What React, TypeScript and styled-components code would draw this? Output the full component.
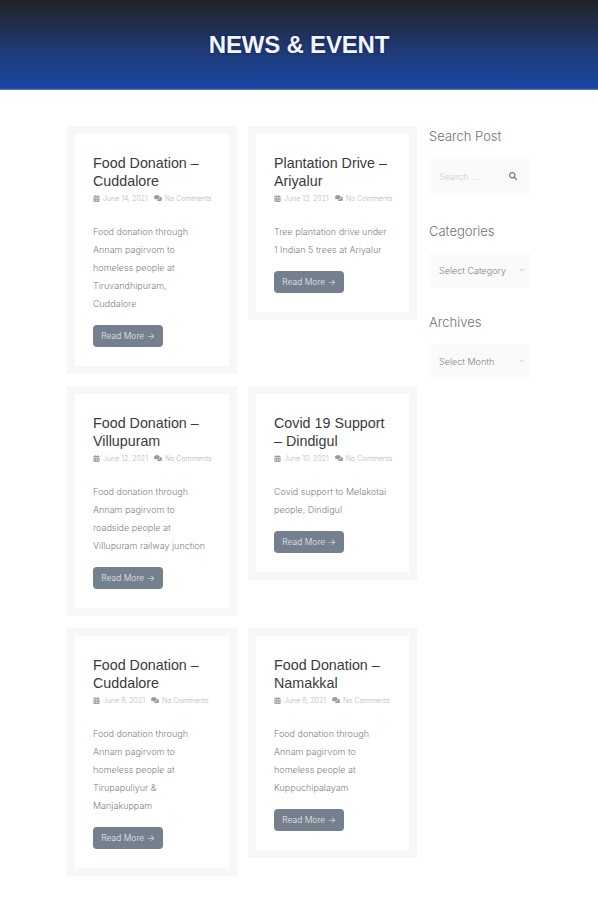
import { FaCalendarAlt, FaComments, FaSearch } from "react-icons/fa";
import { FiChevronDown } from "react-icons/fi";
import styled, { createGlobalStyle } from "styled-components";

type Post = {
  title: string;
  date: string;
  text: string[];
};

const posts: Post[] = [
  {
    title: "Food Donation – Cuddalore",
    date: "June 14, 2021",
    text: ["Food donation through", "Annam pagirvom to", "homeless people at", "Tiruvandhipuram,", "Cuddalore"],
  },
  {
    title: "Plantation Drive – Ariyalur",
    date: "June 13, 2021",
    text: ["Tree plantation drive under", "1 Indian 5 trees at Ariyalur"],
  },
  {
    title: "Food Donation – Villupuram",
    date: "June 12, 2021",
    text: ["Food donation through", "Annam pagirvom to", "roadside people at", "Villupuram railway junction"],
  },
  {
    title: "Covid 19 Support – Dindigul",
    date: "June 10, 2021",
    text: ["Covid support to Melakotai", "people, Dindigul"],
  },
  {
    title: "Food Donation – Cuddalore",
    date: "June 8, 2021",
    text: ["Food donation through", "Annam pagirvom to", "homeless people at", "Tirupapuliyur &", "Manjakuppam"],
  },
  {
    title: "Food Donation – Namakkal",
    date: "June 8, 2021",
    text: ["Food donation through", "Annam pagirvom to", "homeless people at", "Kuppuchipalayam"],
  },
];

const GlobalStyle = createGlobalStyle`
  body {
    margin: 0;
    background: #fff;
    font-family: "Inter", "Liberation Sans", sans-serif;
  }
`;

const Banner = styled.header`
  height: 90px;
  display: flex;
  align-items: center;
  justify-content: center;
  background: linear-gradient(#222226 0%, #1f3a74 55%, #1746a2 98%, #6d8bcb 100%);
  h1 {
    margin: 0;
    font-family: "Liberation Sans", Arial, sans-serif;
    font-size: 24px;
    font-weight: bold;
    letter-spacing: -0.2px;
    color: #f4f6fb;
    text-shadow: 0 0 3px #0c1f5c;
  }
`;
const Content = styled.main`
  display: grid;
  grid-template-columns: 350px 101px;
  column-gap: 12px;
  padding: 36px 0 0 67px;
`;
const PostGrid = styled.div`
  display: grid;
  grid-template-columns: 170px 169px;
  gap: 12px 11px;
  align-items: start;
`;
const Card = styled.article`
  border: 8px solid #f7f7f8;
  padding: 20px 18px 19px;
  h2 {
    margin: 0;
    font-family: "Liberation Sans", Arial, sans-serif;
    font-size: 14.3px;
    font-weight: 400;
    line-height: 18px;
    color: #3a3a3c;
  }
`;
const Meta = styled.div`
  display: flex;
  align-items: center;
  gap: 6px;
  height: 16px;
  margin-bottom: 17px;
  font-size: 7px;
  font-weight: 300;
  color: #b8b8bc;
  white-space: nowrap;
  span {
    display: flex;
    align-items: center;
    gap: 3px;
  }
  svg {
    color: #99999e;
  }
`;
const Body = styled.div`
  margin-bottom: 12px;
  font-size: 9px;
  font-weight: 300;
  line-height: 18px;
  color: #808084;
  white-space: nowrap;
`;
const ReadMore = styled.a`
  display: flex;
  align-items: center;
  justify-content: center;
  width: 70px;
  height: 22px;
  border-radius: 4px;
  background: #74808d;
  color: #e6e9ed;
  font-size: 8.5px;
  font-weight: 300;
`;
const Sidebar = styled.aside`
  display: flex;
  flex-direction: column;
`;
const WidgetTitle = styled.h3`
  margin: 0 0 12px;
  font-size: 13px;
  font-weight: 300;
  line-height: 20px;
  color: #707074;
`;
const Widget = styled.section`
  margin-bottom: 25px;
  &:first-child {
    margin-bottom: 27px;
  }
`;
const Field = styled.div<{ $tall?: boolean }>`
  display: flex;
  align-items: center;
  justify-content: space-between;
  height: ${({ $tall }) => ($tall ? "36px" : "34px")};
  padding: 0 4px 0 10px;
  background: #fafafa;
  font-size: 9px;
  font-weight: 300;
  color: #808084;
`;
const Placeholder = styled.span`
  color: #d0d0d3;
`;
const SearchIcon = styled(FaSearch)`
  margin-right: 9px;
  color: #77777b;
`;
const Chevron = styled(FiChevronDown)`
  color: #b8b8bc;
`;

const App = () => (
  <>
    <GlobalStyle />
    <Banner>
      <h1>NEWS &amp; EVENT</h1>
    </Banner>
    <Content>
      <PostGrid>
        {posts.map((post, index) => (
          <Card key={index}>
            <h2>{post.title}</h2>
            <Meta>
              <span><FaCalendarAlt size={7} />{post.date}</span>
              <span><FaComments size={8} />No Comments</span>
            </Meta>
            <Body>
              {post.text.map((line) => (
                <div key={line}>{line}</div>
              ))}
            </Body>
            <ReadMore>Read More →</ReadMore>
          </Card>
        ))}
      </PostGrid>
      <Sidebar>
        <Widget>
          <WidgetTitle>Search Post</WidgetTitle>
          <Field $tall>
            <Placeholder>Search ...</Placeholder>
            <SearchIcon size={8} />
          </Field>
        </Widget>
        <Widget>
          <WidgetTitle>Categories</WidgetTitle>
          <Field>
            Select Category
            <Chevron size={8} />
          </Field>
        </Widget>
        <Widget>
          <WidgetTitle>Archives</WidgetTitle>
          <Field>
            Select Month
            <Chevron size={8} />
          </Field>
        </Widget>
      </Sidebar>
    </Content>
  </>
);

export default App;
